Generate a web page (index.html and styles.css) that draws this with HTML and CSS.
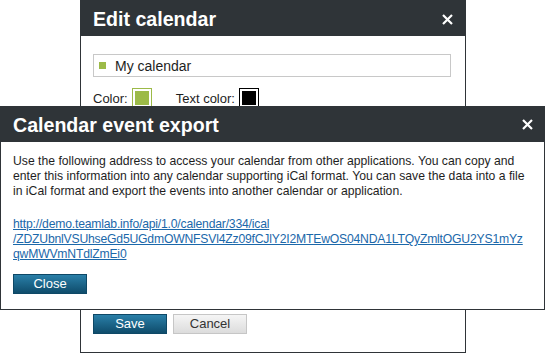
FILE: index.html
```html
<!DOCTYPE html>
<html lang="en">
<head>
  <meta charset="UTF-8" />
  <title>Calendar event export</title>
  <link rel="stylesheet" href="styles.css">
</head>
<body>
  <!-- Edit calendar dialog (behind) -->
  <div class="dialog edit-dialog">
    <div class="dialog-head">
      <span class="dialog-title">Edit calendar</span>
      <svg class="dialog-close" width="11" height="11" viewBox="0 0 11 11"><path d="M1 1L10 10M10 1L1 10" /></svg>
    </div>
    <div class="dialog-body">
      <div class="cal-name"><span class="cal-dot"></span><span>My calendar</span></div>
      <div class="color-row">
        <span class="color-label">Color:</span><span class="swatch swatch-green"><i></i></span>
        <span class="color-label text-color">Text color:</span><span class="swatch swatch-black"><i></i></span>
      </div>
      <div class="buttons">
        <button class="btn btn-blue">Save</button>
        <button class="btn btn-grey">Cancel</button>
      </div>
    </div>
  </div>

  <!-- Export dialog (on top) -->
  <div class="dialog export-dialog">
    <div class="dialog-head">
      <span class="dialog-title">Calendar event export</span>
      <svg class="dialog-close" width="11" height="11" viewBox="0 0 11 11"><path d="M1 1L10 10M10 1L1 10" /></svg>
    </div>
    <div class="dialog-body">
      <p class="export-text">Use the following address to access your calendar from other applications. You can copy and enter this information into any calendar supporting iCal format. You can save the data into a file in iCal format and export the events into another calendar or application.</p>
      <a class="export-link" href="#">http://demo.teamlab.info/api/1.0/calendar/334/ical<br>/ZDZUbnlVSUhseGd5UGdmOWNFSVl4Zz09fCJlY2I2MTEwOS04NDA1LTQyZmltOGU2YS1mYz<br>qwMWVmNTdlZmEi0</a>
      <button class="btn btn-blue">Close</button>
    </div>
  </div>
</body>
</html>
```

FILE: styles.css
```css
* { box-sizing: border-box; margin: 0; padding: 0; }
body {
  font-family: 'Liberation Sans', Arial, sans-serif;
  font-size: 13px;
  color: #1e1e1e;
  background: #fff;
  width: 546px;
  height: 353px;
  overflow: hidden;
  position: relative;
}
.dialog {
  position: absolute;
  background: #fff;
  border: 1px solid #2f3438;
}
.edit-dialog {
  left: 80px;
  top: 0;
  width: 386px;
  height: 353px;
}
.export-dialog {
  left: 0;
  top: 106px;
  width: 545px;
}
.dialog-head {
  height: 35px;
  background: #2f3438;
  display: flex;
  justify-content: space-between;
  align-items: flex-start;
  padding: 6px 12px 0 12px;
}
.export-dialog .dialog-head { padding-right: 11px; }
.dialog-title {
  color: #fff;
  font-size: 19.6px;
  font-weight: bold;
  line-height: 24px;
}
.dialog-close {
  stroke: #fff;
  stroke-width: 2.2;
  fill: none;
}
.edit-dialog .dialog-close { margin-top: 7px; }
.export-dialog .dialog-close { margin-top: 6px; }
.dialog-body {
  padding: 18px 12px 0 12px;
}
.export-dialog .dialog-body {
  padding: 12px 12px 15px 12px;
}
.cal-name {
  width: 358px;
  height: 23px;
  border: 1px solid #c8c8c8;
  display: flex;
  align-items: center;
  font-size: 14px;
  padding-left: 5px;
}
.cal-dot {
  width: 7px;
  height: 7px;
  background: #9cba48;
  margin-right: 9px;
}
.color-row {
  margin-top: 11px;
  display: flex;
  align-items: center;
  height: 20px;
}
.color-label { margin-right: 4px; }
.text-color { margin-left: 24px; }
.swatch {
  width: 20px;
  height: 20px;
  padding: 2px;
  background: #fff;
  border: 1px solid #9cba48;
}
.swatch i {
  display: block;
  width: 100%;
  height: 100%;
  background: #9cba48;
}
.swatch-black { border-color: #000; }
.swatch-black i { background: #000; }
.buttons {
  margin-top: 206px;
  display: flex;
  gap: 6px;
}
.btn {
  width: 74px;
  height: 20px;
  font-family: 'Liberation Sans', Arial, sans-serif;
  font-size: 13px;
  line-height: 18px;
  text-align: center;
  cursor: pointer;
}
.btn-blue {
  color: #fff;
  background: linear-gradient(to bottom, #2a7fa8, #0f4c6b);
  border: 1px solid #0e4866;
}
.btn-grey {
  color: #333;
  background: linear-gradient(to bottom, #f5f5f5, #dcdcdc);
  border: 1px solid #c6c6c6;
}
.export-text {
  font-size: 12.2px;
  line-height: 15px;
}
.export-link {
  display: block;
  margin-top: 18px;
  font-size: 12.2px;
  line-height: 15px;
  letter-spacing: -0.2px;
  color: #1b68aa;
  text-decoration: underline;
  white-space: nowrap;
}
.export-dialog .btn { margin-top: 12px; display: block; }
```
